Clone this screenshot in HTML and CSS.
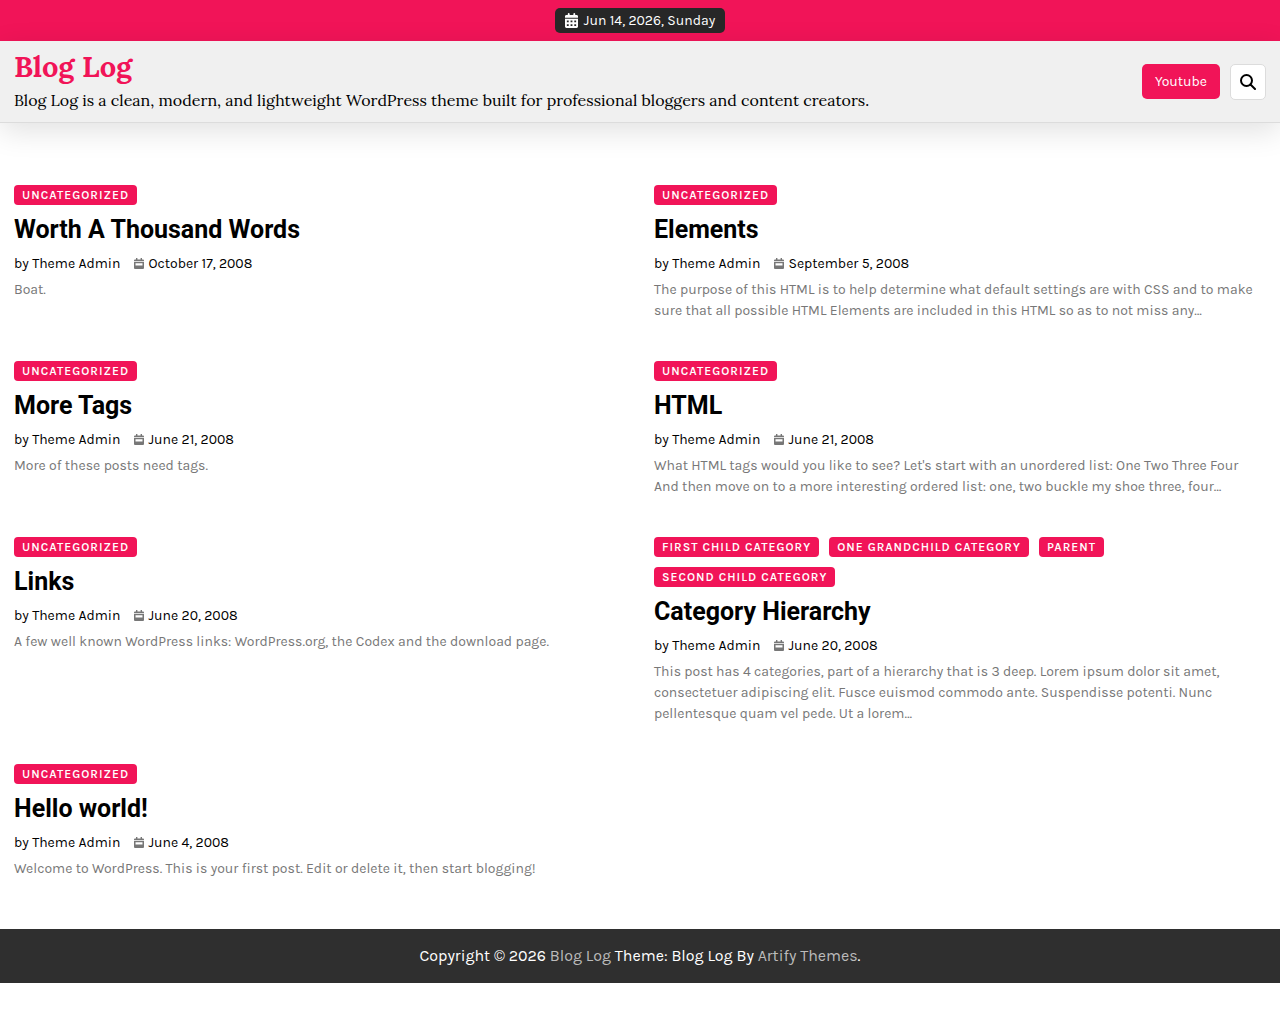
FILE: index.html
```html
<!DOCTYPE html>
<html lang="en">
<head>
<meta charset="utf-8">
<meta name="viewport" content="width=device-width, initial-scale=1">
<title>Blog Log</title>
<link rel="stylesheet" href="styles.css">
</head>
<body>
<svg class="sprite" aria-hidden="true">
  <symbol id="calendar" viewBox="0 0 10 11"><path fill-rule="evenodd" d="M2 0h1.400v1.500h3.200V0H8v1.500h1q1 0 1 1V3.200H0v-.7q0-1 1-1h1zM0 4h10v6q0 1-1 1H1q-1 0-1-1zM1.500 5.300v2.200h7V5.300z"/></symbol>
  <symbol id="calendar-days" viewBox="0 0 448 512"><path fill-rule="evenodd" d="M128 0c18 0 32 14 32 32v32h128V32c0-18 14-32 32-32s32 14 32 32v32h48c26 0 48 22 48 48v48H0v-48c0-26 22-48 48-48h48V32c0-18 14-32 32-32zM0 192h448v272c0 26-22 48-48 48H48c-26 0-48-22-48-48zM64 256v64h64v-64zM192 256v64h64v-64zM320 256v64h64v-64zM64 384v64h64v-64zM192 384v64h64v-64zM320 384v64h64v-64z"/></symbol>
</svg>

<div class="topbar">
  <time class="today" datetime="2026-06-14"><svg class="today-icon"><use href="#calendar-days"/></svg>Jun 14, 2026, Sunday</time>
</div>

<header class="site-header">
  <div class="branding">
    <h1 class="site-title"><a href="#">Blog Log</a></h1>
    <p class="tagline">Blog Log is a clean, modern, and lightweight WordPress theme built for professional bloggers and content creators.</p>
  </div>
  <div class="actions">
    <a class="social-link" href="#">Youtube</a>
    <button class="search-button" type="button" aria-label="Search"><svg class="search-icon" viewBox="0 0 16 16"><circle cx="6.500" cy="6.500" r="5.500"/><path d="M10.500 10.500L15 15"/></svg></button>
  </div>
</header>

<main class="posts">
  <article class="post">
    <div class="categories"><a class="category" href="#">Uncategorized</a></div>
    <h2 class="post-title"><a href="#">Worth A Thousand Words</a></h2>
    <div class="meta"><a href="#">by Theme Admin</a><a class="date" href="#"><svg class="date-icon"><use href="#calendar"/></svg>October 17, 2008</a></div>
    <p class="excerpt">Boat.</p>
  </article>
  <article class="post">
    <div class="categories"><a class="category" href="#">Uncategorized</a></div>
    <h2 class="post-title"><a href="#">Elements</a></h2>
    <div class="meta"><a href="#">by Theme Admin</a><a class="date" href="#"><svg class="date-icon"><use href="#calendar"/></svg>September 5, 2008</a></div>
    <p class="excerpt">The purpose of this HTML is to help determine what default settings are with CSS and to make sure that all possible HTML Elements are included in this HTML so as to not miss any…</p>
  </article>
  <article class="post">
    <div class="categories"><a class="category" href="#">Uncategorized</a></div>
    <h2 class="post-title"><a href="#">More Tags</a></h2>
    <div class="meta"><a href="#">by Theme Admin</a><a class="date" href="#"><svg class="date-icon"><use href="#calendar"/></svg>June 21, 2008</a></div>
    <p class="excerpt">More of these posts need tags.</p>
  </article>
  <article class="post">
    <div class="categories"><a class="category" href="#">Uncategorized</a></div>
    <h2 class="post-title"><a href="#">HTML</a></h2>
    <div class="meta"><a href="#">by Theme Admin</a><a class="date" href="#"><svg class="date-icon"><use href="#calendar"/></svg>June 21, 2008</a></div>
    <p class="excerpt">What HTML tags would you like to see? Let's start with an unordered list: One Two Three Four And then move on to a more interesting ordered list: one, two buckle my shoe three, four…</p>
  </article>
  <article class="post">
    <div class="categories"><a class="category" href="#">Uncategorized</a></div>
    <h2 class="post-title"><a href="#">Links</a></h2>
    <div class="meta"><a href="#">by Theme Admin</a><a class="date" href="#"><svg class="date-icon"><use href="#calendar"/></svg>June 20, 2008</a></div>
    <p class="excerpt">A few well known WordPress links: WordPress.org, the Codex and the download page.</p>
  </article>
  <article class="post">
    <div class="categories"><a class="category" href="#">First Child Category</a><a class="category" href="#">One Grandchild Category</a><a class="category" href="#">Parent</a><a class="category" href="#">Second Child Category</a></div>
    <h2 class="post-title"><a href="#">Category Hierarchy</a></h2>
    <div class="meta"><a href="#">by Theme Admin</a><a class="date" href="#"><svg class="date-icon"><use href="#calendar"/></svg>June 20, 2008</a></div>
    <p class="excerpt">This post has 4 categories, part of a hierarchy that is 3 deep. Lorem ipsum dolor sit amet, consectetuer adipiscing elit. Fusce euismod commodo ante. Suspendisse potenti. Nunc pellentesque quam vel pede. Ut a lorem…</p>
  </article>
  <article class="post">
    <div class="categories"><a class="category" href="#">Uncategorized</a></div>
    <h2 class="post-title"><a href="#">Hello world!</a></h2>
    <div class="meta"><a href="#">by Theme Admin</a><a class="date" href="#"><svg class="date-icon"><use href="#calendar"/></svg>June 4, 2008</a></div>
    <p class="excerpt">Welcome to WordPress. This is your first post. Edit or delete it, then start blogging!</p>
  </article>
</main>

<footer class="site-footer">Copyright © 2026 <a href="#">Blog Log</a> Theme: Blog Log By <a href="#">Artify Themes</a>.</footer>
</body>
</html>
```
FILE: styles.css
```css
* { box-sizing: border-box; }
body {
  margin: 0;
  background: #fff;
  color: #000;
  font: 14px/21px Karla, Inter, sans-serif;
}
h1, h2, p { margin: 0; }
a { color: inherit; text-decoration: none; }
svg { fill: currentColor; flex: none; }
.sprite { display: none; }

.topbar {
  display: flex;
  justify-content: center;
  padding: 8px 14px;
  background: #f11458;
}
.today {
  display: flex;
  align-items: center;
  gap: 6px;
  padding: 2px 10px;
  border-radius: 5px;
  background: #272727;
  color: #fff;
}
.today-icon { width: 13px; height: 15px; }

.site-header {
  display: flex;
  align-items: center;
  justify-content: space-between;
  gap: 20px;
  padding: 9px 14px;
  border-bottom: 1px solid #dcdcdc;
  background: #f0f0f0;
  box-shadow: 0 8px 30px rgba(0, 0, 0, .12);
}
.site-title { color: #f11458; font: 700 29px/34px Lora, "Liberation Serif", serif; }
.tagline { padding-top: 4px; font: 16px/25px Lora, "Liberation Serif", serif; }
.actions { display: flex; align-items: center; gap: 10px; }
.social-link {
  padding: 7px 13px;
  border-radius: 5px;
  background: #f11458;
  color: #fff;
}
.search-button {
  display: grid;
  place-items: center;
  width: 36px;
  height: 36px;
  padding: 0;
  border: 1px solid #dcdcdc;
  border-radius: 5px;
  background: #fff;
  color: #000;
}
.search-icon { width: 16px; height: 16px; fill: none; stroke: currentColor; stroke-width: 2; stroke-linecap: round; }

.posts {
  display: grid;
  grid-template-columns: repeat(2, minmax(0, 1fr));
  gap: 40px 28px;
  padding: 62px 14px 50px;
}
.categories { display: flex; flex-wrap: wrap; gap: 10px; }
.category {
  padding: 0 8px;
  border-radius: 4px;
  background: #f11458;
  color: #fff;
  font-size: 12px;
  font-weight: 600;
  line-height: 20px;
  letter-spacing: 1px;
  text-transform: uppercase;
}
.post-title { padding: 10px 0 8px; font: 700 25px/30px Roboto, sans-serif; }
.meta { display: flex; gap: 14px; }
.date { display: flex; align-items: center; gap: 4px; }
.date-icon { width: 10px; height: 11px; color: #777; }
.excerpt { padding-top: 5px; color: #777; }

.site-footer {
  padding: 15px 14px;
  background: #2f2f2f;
  color: #fff;
  font-size: 16px;
  line-height: 24px;
  text-align: center;
}
.site-footer a { color: #bbb; }
```
